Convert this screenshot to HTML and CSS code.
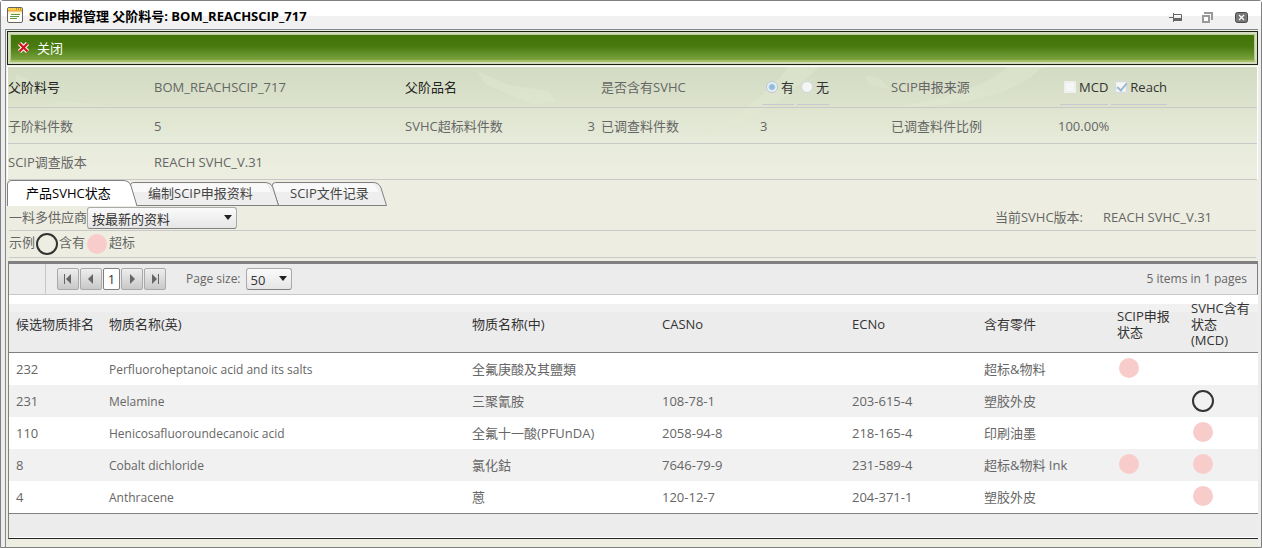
FILE: index.html
```html
<!DOCTYPE html>
<html lang="zh-CN">
<head>
<meta charset="utf-8">
<title>SCIP申报管理</title>
<link rel="stylesheet" href="styles.css">
</head>
<body>
<div class="window">
  <header class="titlebar">
    <svg class="app-icon" width="16" height="16" viewBox="0 0 16 16" aria-hidden="true">
      <rect x=".5" y=".5" width="15" height="15" rx="1.5" fill="#fff" stroke="#66665a"/>
      <path d="M1 1h14v3H1z" fill="#f9cf48"/><path d="M1 4h14" stroke="#e2942a"/>
      <path d="M9 2h1M11 2h1M13 2h1" stroke="#a05a10"/>
      <path d="M1 5h14v2H1z" fill="#fdf3cf"/>
      <path d="M4 7.500h9M3 9.500h9M3 11.500h7" stroke="#5a9a3c"/>
    </svg>
    <h1 class="title">SCIP申报管理 父阶料号: BOM_REACHSCIP_717</h1>
    <div class="window-buttons">
      <button class="window-button" type="button" aria-label="Pin"><svg width="14" height="14" viewBox="0 0 14 14"><path d="M0 7.500h4M4.500 3v9M5 4.500h7.500v6H5" fill="none" stroke="#666"/><path d="M5 8h8v3H5z" fill="#666"/></svg></button>
      <button class="window-button" type="button" aria-label="Restore"><svg width="14" height="14" viewBox="0 0 14 14"><path d="M2 3h8v7" fill="none" stroke="#999" stroke-width="2"/><path d="M1 6h6v6H1z" fill="#fff" stroke="#999" stroke-width="2"/></svg></button>
      <button class="window-button" type="button" aria-label="Close"><svg width="14" height="14" viewBox="0 0 14 14"><rect x=".5" y="2.500" width="12" height="10" rx="2" fill="#777" stroke="#4a4a4a"/><path d="M4 5l5 5M9 5l-5 5" stroke="#fff" stroke-width="1.200"/></svg></button>
    </div>
  </header>
  <main class="content">
    <div class="toolbar">
      <button class="close-command" type="button">
        <svg width="13" height="13" viewBox="0 0 13 13" aria-hidden="true"><path d="M2.500 2.500l8 8M10.500 2.500l-8 8" stroke="#fff" stroke-width="4.500"/><path d="M2.500 2.500l8 8M10.500 2.500l-8 8" stroke="#d3171b" stroke-width="2.400"/></svg>
        <span>关闭</span>
      </button>
    </div>
    <section class="details">
      <svg class="leaves" viewBox="0 0 1250 114" preserveAspectRatio="none" aria-hidden="true">
        <path d="M885 40C950 42 1010 28 1035 0H1000C980 18 940 34 885 40zM690 72C740 60 780 30 812 0H780C766 24 730 50 690 72zM470 4l30 14 40 6 8 10-20 4-50-20z" fill="#e3ead3"/>
        <path d="M20 42l35-8 70 8zM8 6l14 8 8 6-22-4zM858 8l16 4 8 10-20-4z" fill="#e2e9d2"/>
      </svg>
      <div class="fields first">
        <span class="strong">父阶料号</span><span>BOM_REACHSCIP_717</span><span class="strong">父阶品名</span><span>是否含有SVHC</span>
        <div class="choices"><label class="choice"><input class="radio" type="radio" name="svhc" checked>有</label><label class="choice"><input class="radio" type="radio" name="svhc">无</label></div>
        <span>SCIP申报来源</span>
        <div class="choices"><label class="choice"><input class="check" type="checkbox">MCD</label><label class="choice"><input class="check" type="checkbox" checked>Reach</label></div>
      </div>
      <div class="fields">
        <span>子阶料件数</span><span>5</span><span class="counted">SVHC超标料件数<span>3</span></span><span>已调查料件数</span><span>3</span><span>已调查料件比例</span><span>100.00%</span>
      </div>
      <div class="fields last">
        <span>SCIP调查版本</span><span>REACH SVHC_V.31</span>
      </div>
    </section>
    <div class="tabs" role="tablist">
      <button class="tab tab-active" type="button" role="tab" aria-selected="true"><svg class="tab-shape" viewBox="0 0 130 26" preserveAspectRatio="none" aria-hidden="true"><path d="M.5 27V5Q.5.500 5 .5H116Q122 .5 124 6L130 26" fill="#fff" stroke="#808080"/></svg><span>产品SVHC状态</span></button>
      <button class="tab tab-edit" type="button" role="tab" aria-selected="false"><svg class="tab-shape" viewBox="0 0 150 24" preserveAspectRatio="none" aria-hidden="true"><path d="M7.500 23.500L1 4Q1 .5 5 .5H136Q142 .5 144 6L149.500 23.500z" fill="#eee" stroke="#808080"/><path d="M3 1.500H137L142 10H4z" fill="#f9f9f9"/></svg><span>编制SCIP申报资料</span></button>
      <button class="tab tab-files" type="button" role="tab" aria-selected="false"><svg class="tab-shape" viewBox="0 0 116 24" preserveAspectRatio="none" aria-hidden="true"><path d="M7.500 23.500L1 4Q1 .5 5 .5H102Q108 .5 110 6L115.500 23.500z" fill="#eee" stroke="#808080"/><path d="M3 1.500H103L108 10H4z" fill="#f9f9f9"/></svg><span>SCIP文件记录</span></button>
    </div>
    <div class="filter">
      <label for="supplier">一料多供应商</label>
      <span class="select-box supplier"><select id="supplier"><option>按最新的资料</option></select></span>
      <span class="version">当前SVHC版本:</span><span class="version-value">REACH SVHC_V.31</span>
    </div>
    <div class="legend">
      <span>示例</span><i class="ring"></i><span>含有</span><i class="dot"></i><span>超标</span>
    </div>
    <section class="grid">
      <div class="pager">
        <span class="pager-gap"></span>
        <nav class="pages" aria-label="Pages">
          <button class="page" type="button" aria-label="First page"><svg width="12" height="12" viewBox="0 0 12 12"><path d="M2.500 1v10" stroke="#666"/><path d="M9 1v10L4 6z" fill="#666"/></svg></button>
          <button class="page" type="button" aria-label="Previous page"><svg width="12" height="12" viewBox="0 0 12 12"><path d="M8 1v10L3 6z" fill="#666"/></svg></button>
          <button class="page page-current" type="button">1</button>
          <button class="page" type="button" aria-label="Next page"><svg width="12" height="12" viewBox="0 0 12 12"><path d="M4 1v10L9 6z" fill="#666"/></svg></button>
          <button class="page" type="button" aria-label="Last page"><svg width="12" height="12" viewBox="0 0 12 12"><path d="M3 1v10L8 6z" fill="#666"/><path d="M9.500 1v10" stroke="#666"/></svg></button>
        </nav>
        <label class="latin" for="size">Page size:</label>
        <span class="select-box size"><select id="size"><option>50</option></select></span>
        <span class="summary latin">5 items in 1 pages</span>
      </div>
      <table class="substances">
        <colgroup><col class="c-rank"><col><col class="c-text"><col class="c-text"><col class="c-code"><col class="c-part"><col class="c-state"><col class="c-state"></colgroup>
        <thead><tr><th>候选物质排名</th><th>物质名称(英)</th><th>物质名称(中)</th><th>CASNo</th><th>ECNo</th><th>含有零件</th><th>SCIP申报<br>状态</th><th>SVHC含有<br>状态<br>(MCD)</th></tr></thead>
        <tbody>
          <tr><td>232</td><td class="latin">Perfluoroheptanoic acid and its salts</td><td>全氟庚酸及其鹽類</td><td></td><td></td><td>超标&amp;物料</td><td><i class="dot"></i></td><td></td></tr>
          <tr><td>231</td><td class="latin">Melamine</td><td>三聚氰胺</td><td>108-78-1</td><td>203-615-4</td><td>塑胶外皮</td><td></td><td><i class="ring"></i></td></tr>
          <tr><td>110</td><td class="latin">Henicosafluoroundecanoic acid</td><td>全氟十一酸(PFUnDA)</td><td>2058-94-8</td><td>218-165-4</td><td>印刷油墨</td><td></td><td><i class="dot"></i></td></tr>
          <tr><td>8</td><td class="latin">Cobalt dichloride</td><td>氯化鈷</td><td>7646-79-9</td><td>231-589-4</td><td>超标&amp;物料 Ink</td><td><i class="dot"></i></td><td><i class="dot"></i></td></tr>
          <tr><td>4</td><td class="latin">Anthracene</td><td>蒽</td><td>120-12-7</td><td>204-371-1</td><td>塑胶外皮</td><td></td><td><i class="dot"></i></td></tr>
        </tbody>
      </table>
      <div class="grid-footer"></div>
    </section>
  </main>
</div>
</body>
</html>
```
FILE: styles.css
```css
* { box-sizing: border-box; }
body { margin: 0; color: #666; font: 13px/16px "Open Sans", "Noto Sans CJK SC", sans-serif; }
button, select, input { margin: 0; font: inherit; color: inherit; }
button { padding: 0; border: 0; background: none; }
svg { display: block; }
.latin { font-size: 12px; }
.window { display: flex; flex-direction: column; min-height: 100vh; padding-right: 3px; border: 1px solid #808080; border-radius: 3px 3px 0 0; background: #ededed; }
.titlebar { display: flex; align-items: center; height: 28px; margin-right: -3px; padding: 0 12px 0 6px; background: linear-gradient(#fff 15px, #f1f1f1 15px); }
.title { flex: 1; margin: 0 0 0 6px; padding-top: 1px; color: #000; font-size: 13px; line-height: 18px; font-weight: 700; }
.app-icon { margin-bottom: 1px; }
.window-buttons { display: flex; gap: 19px; padding-top: 4px; }
.window-button { width: 14px; height: 14px; }
.content { display: flex; flex: 1; flex-direction: column; margin-left: 4px; padding: 1px 0 0 1px; border-top: 1px solid #808890; border-left: 1px solid #808890; background: #edeee1; }
.toolbar { height: 34px; border: 1px solid #1c2410; padding: 2px; background: #d3dcc0; }
.close-command { display: flex; align-items: center; gap: 7px; width: 100%; height: 28px; padding: 0 6px; border: 1px solid #b7cb92; border-bottom: 2px solid #a4bf62; background: linear-gradient(#437409, #487a0e 45%, #6b9732 85%, #7fa344); color: #fff; }
.details { position: relative; margin-top: 1px; border: 1px solid #fff; border-bottom: 0; background: linear-gradient(#d3dbc3, #dce2cc 38px, #dfe5d0 45px, #e8ecdc 80px, #edeee1); }
.leaves { position: absolute; inset: 0; width: 100%; height: 100%; opacity: .45; }
.fields { position: relative; display: grid; grid-template-columns: 146px 251px 196px 159px 131px 167px 1fr; align-items: center; height: 36px; border-bottom: 1px solid #c8c9c8; }
.first { height: 41px; }
.first .choices { margin-top: 3px; }
.strong { color: #222; }
.counted { display: flex; justify-content: space-between; padding-right: 6px; }
.choices { display: flex; gap: 3px; height: 32px; padding-left: 2px; color: #333; }
.choice { display: flex; align-items: center; gap: 3px; padding: 0 0 3px 4px; border-bottom: 1px solid #c5c9d0; }
.radio, .check { appearance: none; width: 12px; height: 12px; border: 1px solid #d0d7df; background: #f5f5f5; }
.radio { border-radius: 50%; }
.radio:checked { border-color: #b8c6d4; background: radial-gradient(#8fbbd8 2px, #b6d3e6 3px, #eef3f6 4px); }
.check { border: 2px solid #eef0ee; background: #f6f6f6; }
.check:checked { position: relative; outline: 1px solid #d3dae2; outline-offset: -1px; }
.check:checked::after { content: ""; position: absolute; left: 2px; top: -2px; width: 4px; height: 8px; border: solid #9db9d3; border-width: 0 2px 2px 0; transform: rotate(40deg); }
.tabs { position: relative; display: flex; align-items: flex-end; height: 26px; }
.tab { position: relative; height: 24px; margin-left: -8px; padding: 0 0 2px 19px; text-align: left; color: #444; white-space: nowrap; }
.tab span { position: relative; }
.tab-active { z-index: 3; width: 130px; height: 26px; margin-left: 0; padding-bottom: 0; color: #000; }
.tab-edit { z-index: 2; width: 150px; }
.tab-files { z-index: 1; width: 116px; }
.tab-shape { position: absolute; inset: 0; width: 100%; height: 100%; }
.filter, .legend { display: flex; align-items: center; margin: 0 2px; border-bottom: 1px solid #c8c9c8; }
.filter { height: 25px; }
.filter > label { margin-bottom: 2px; }
.legend { height: 27px; }
.legend span { margin-bottom: 4px; }
.select-box { position: relative; display: inline-flex; height: 22px; }
.select-box select { width: 100%; padding: 2px 4px 0; appearance: none; border: 1px solid #aaa; border-bottom-color: #808080; border-radius: 3px; background: linear-gradient(#fafafa, #e6e6e6); color: #333; }
.select-box::after { content: ""; position: absolute; right: 5px; top: 8px; border: solid transparent; border-width: 5px 4px 0; border-top-color: #222; }
.supplier { width: 150px; }
.version { margin-left: auto; padding-bottom: 2px; }
.version-value { margin: 0 44px 2px 20px; }
.ring, .dot { display: block; flex: none; width: 22px; height: 22px; border-radius: 50%; }
.ring { border: 2px solid #333; }
.dot { width: 20px; height: 20px; background: #f7cccb; }
.legend .ring { margin: 0 1px; }
.legend .dot { margin: 0 2px; }
.grid { margin: 3px 0 0 1px; border-top: 3px solid #808080; border-left: 1px solid #808080; border-bottom: 1px solid #22242a; background: #fff; }
.pager { display: flex; align-items: center; height: 31px; border-right: 1px solid #808080; border-bottom: 1px solid #c8c8c8; background: #ececec; }
.pager-gap { align-self: stretch; width: 37px; border-right: 1px solid #c8c8c8; }
.pages { display: flex; gap: 1px; margin: 0 20px 0 11px; }
.page { display: flex; align-items: center; justify-content: center; width: 22px; height: 22px; border: 1px solid #aaa; border-radius: 2px; background: linear-gradient(#eee, #c8c8c8); }
.page-current { width: 17px; border-color: #808080; background: #fff; color: #333; }
.size { width: 46px; margin-left: 5px; }
.summary { margin: 0 10px 0 auto; }
.substances { width: 100%; table-layout: fixed; border-collapse: separate; border-spacing: 0; }
.c-rank { width: 93px; }
.c-text { width: 190px; }
.c-code { width: 132px; }
.c-part { width: 133px; }
.c-state { width: 74px; }
.substances th, .substances td { padding: 0 0 0 7px; text-align: left; font-weight: 400; }
.substances td.latin { padding-top: 1px; }
.substances th { height: 58px; border-bottom: 1px solid #808080; color: #333; background: linear-gradient(#fff 9px, #f1f1f1 9px 17px, #ececec 17px); }
.substances tbody tr { height: 32px; }
.substances tbody tr:nth-child(even) { background: #f1f1f1; }
.substances .dot { margin: 0 0 2px 2px; }
.substances .ring { margin-left: 1px; }
.grid-footer { height: 25px; border-top: 1px solid #808080; border-bottom: 1px solid #fff; background: #ececec; }
```
